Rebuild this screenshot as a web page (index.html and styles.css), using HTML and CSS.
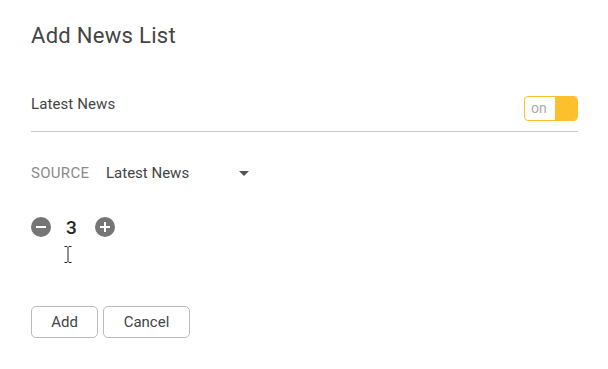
FILE: index.html
```html
<!DOCTYPE html>
<html lang="en">
<head>
    <meta charset="UTF-8">
    <title>Add News List</title>
    <link rel="stylesheet" href="styles.css">
</head>
<body>
    <div class="painel">
        <h1 class="titulo">Add News List</h1>

        <div class="linha-lista">
            <span class="nome-lista">Latest News</span>
            <div class="toggle">
                <span class="toggle-texto">on</span>
                <span class="toggle-botao"></span>
            </div>
        </div>

        <div class="linha-fonte">
            <span class="rotulo">SOURCE</span>
            <div class="seletor">
                <span>Latest News</span>
                <span class="seta"></span>
            </div>
        </div>

        <div class="contador">
            <span class="circulo">
                <svg width="20" height="20" viewBox="0 0 20 20"><circle cx="10" cy="10" r="10" fill="#757575"/><rect x="5" y="9" width="10" height="2" fill="#fff"/></svg>
            </span>
            <span class="numero">3</span>
            <span class="circulo">
                <svg width="20" height="20" viewBox="0 0 20 20"><circle cx="10" cy="10" r="10" fill="#757575"/><rect x="5" y="9" width="10" height="2" fill="#fff"/><rect x="9" y="5" width="2" height="10" fill="#fff"/></svg>
            </span>
        </div>

        <div class="cursor-linha">
            <svg width="8" height="17" viewBox="0 0 8 17"><path d="M0.5 0.5h2.5l1 1l1-1h2.5M4 1.5v14M0.5 16.5h2.5l1-1l1 1h2.5" stroke="#222" stroke-width="1" fill="none"/></svg>
        </div>

        <div class="acoes">
            <button class="botao botao-add">Add</button>
            <button class="botao botao-cancel">Cancel</button>
        </div>
    </div>
</body>
</html>
```

FILE: styles.css
```css
body {
    font-family: Roboto, "Liberation Sans", sans-serif;
    background-color: #fff;
    color: #444;
    margin: 0;
    padding: 0;
}

.painel {
    width: 547px;
    padding: 21px 30px 0 31px;
}

.titulo {
    font-size: 22px;
    font-weight: 400;
    color: #444;
    margin: 0;
    line-height: 30px;
    letter-spacing: 0.3px;
}

.linha-lista {
    display: flex;
    justify-content: space-between;
    align-items: center;
    margin-top: 45px;
    height: 25px;
    padding-bottom: 10px;
    border-bottom: 1px solid #c8c8c8;
}

.nome-lista {
    font-size: 15px;
    color: #444;
    margin-top: -9px;
    letter-spacing: 0.1px;
}

.toggle {
    display: flex;
    width: 52px;
    height: 23px;
    border: 1px solid #fbc02d;
    border-radius: 4px;
    overflow: hidden;
}

.toggle-texto {
    flex: 1;
    font-size: 14px;
    color: #aaa;
    line-height: 22px;
    padding-left: 6px;
}

.toggle-botao {
    width: 22px;
    background-color: #fcc02e;
}

.linha-fonte {
    display: flex;
    align-items: center;
    margin-top: 31px;
    height: 20px;
    font-size: 15px;
}

.rotulo {
    color: #8a8a8a;
    letter-spacing: 0.3px;
    width: 75px;
}

.seletor {
    display: flex;
    align-items: center;
    width: 143px;
    justify-content: space-between;
    color: #444;
}

.seta {
    width: 0;
    height: 0;
    border-left: 5px solid transparent;
    border-right: 5px solid transparent;
    border-top: 5px solid #555;
}

.contador {
    display: flex;
    align-items: center;
    margin-top: 34px;
    height: 20px;
}

.circulo {
    display: flex;
    width: 20px;
    height: 20px;
}

.numero {
    font-size: 19px;
    font-weight: 500;
    color: #222;
    width: 29px;
    padding-left: 15px;
}

.cursor-linha {
    height: 17px;
    margin-top: 9px;
    padding-left: 33px;
}

.acoes {
    display: flex;
    gap: 5px;
    margin-top: 43px;
}

.botao {
    font-family: Roboto, "Liberation Sans", sans-serif;
    font-size: 15px;
    color: #444;
    background: #fff;
    border: 1px solid #bbb;
    border-radius: 5px;
    height: 32px;
    padding: 0;
    cursor: pointer;
}

.botao-add {
    width: 67px;
}

.botao-cancel {
    width: 87px;
}
```
